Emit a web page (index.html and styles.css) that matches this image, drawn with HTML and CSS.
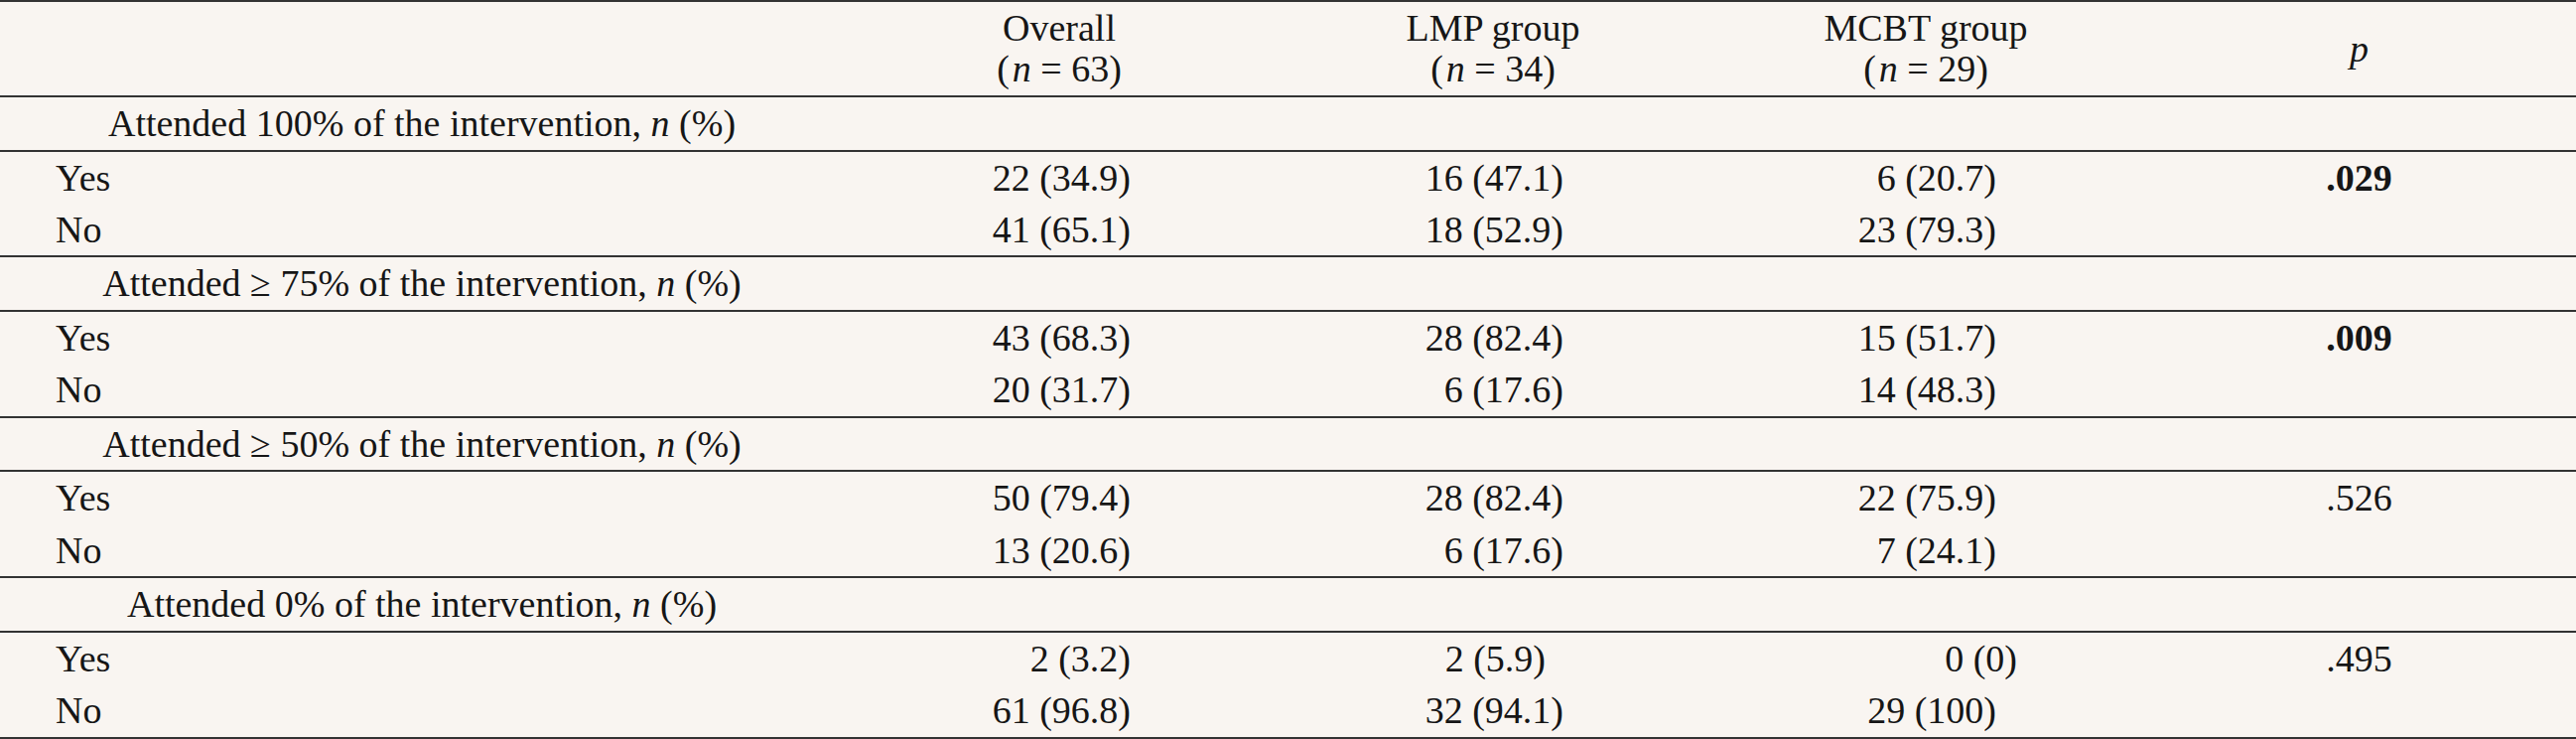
FILE: index.html
```html
<!DOCTYPE html>
<html lang="en">
<head>
<meta charset="utf-8">
<title>Attendance table</title>
<link rel="stylesheet" href="styles.css">
</head>
<body>
<table class="tbl">
  <colgroup>
    <col class="c-label">
    <col class="c-num">
    <col class="c-num">
    <col class="c-num">
    <col class="c-p">
  </colgroup>
  <thead>
    <tr class="head">
      <th></th>
      <th>Overall<br>(<i class="n">n</i> = 63)</th>
      <th>LMP group<br>(<i class="n">n</i> = 34)</th>
      <th>MCBT group<br>(<i class="n">n</i> = 29)</th>
      <th><i>p</i></th>
    </tr>
  </thead>
  <tbody>
    <tr class="section">
      <td class="sec-label">Attended 100% of the intervention, <i>n</i> (%)</td>
      <td></td><td></td><td></td><td></td>
    </tr>
    <tr class="row">
      <td class="lbl">Yes</td>
      <td class="val">22 (34.9)</td>
      <td class="val">16 (47.1)</td>
      <td class="val">6 (20.7)</td>
      <td class="pv"><b>.029</b></td>
    </tr>
    <tr class="row last">
      <td class="lbl">No</td>
      <td class="val">41 (65.1)</td>
      <td class="val">18 (52.9)</td>
      <td class="val">23 (79.3)</td>
      <td class="pv"></td>
    </tr>

    <tr class="section">
      <td class="sec-label">Attended ≥ 75% of the intervention, <i>n</i> (%)</td>
      <td></td><td></td><td></td><td></td>
    </tr>
    <tr class="row">
      <td class="lbl">Yes</td>
      <td class="val">43 (68.3)</td>
      <td class="val">28 (82.4)</td>
      <td class="val">15 (51.7)</td>
      <td class="pv"><b>.009</b></td>
    </tr>
    <tr class="row last">
      <td class="lbl">No</td>
      <td class="val">20 (31.7)</td>
      <td class="val">6 (17.6)</td>
      <td class="val">14 (48.3)</td>
      <td class="pv"></td>
    </tr>

    <tr class="section">
      <td class="sec-label">Attended ≥ 50% of the intervention, <i>n</i> (%)</td>
      <td></td><td></td><td></td><td></td>
    </tr>
    <tr class="row">
      <td class="lbl">Yes</td>
      <td class="val">50 (79.4)</td>
      <td class="val">28 (82.4)</td>
      <td class="val">22 (75.9)</td>
      <td class="pv">.526</td>
    </tr>
    <tr class="row last">
      <td class="lbl">No</td>
      <td class="val">13 (20.6)</td>
      <td class="val">6 (17.6)</td>
      <td class="val">7 (24.1)</td>
      <td class="pv"></td>
    </tr>

    <tr class="section">
      <td class="sec-label">Attended 0% of the intervention, <i>n</i> (%)</td>
      <td></td><td></td><td></td><td></td>
    </tr>
    <tr class="row">
      <td class="lbl">Yes</td>
      <td class="val">2 (3.2)</td>
      <td class="val shift-left">2 (5.9)</td>
      <td class="val shift-right">0 (0)</td>
      <td class="pv">.495</td>
    </tr>
    <tr class="row last">
      <td class="lbl">No</td>
      <td class="val">61 (96.8)</td>
      <td class="val">32 (94.1)</td>
      <td class="val">29 (100)</td>
      <td class="pv"></td>
    </tr>
  </tbody>
</table>
</body>
</html>
```

FILE: styles.css
```css
html, body {
  margin: 0;
  padding: 0;
  background: #f9f5f1;
}

body {
  font-family: "Liberation Serif", "Times New Roman", serif;
  font-size: 38px;
  color: #161616;
}

.tbl {
  width: 2595px;
  table-layout: fixed;
  border-collapse: separate;
  border-spacing: 0;
  border-top: 2px solid #333;
}

.c-label { width: 850px; }
.c-num { width: 436px; }
.c-p { width: 437px; }

.tbl th,
.tbl td {
  padding: 0;
  font-weight: normal;
  white-space: nowrap;
}

.head th {
  text-align: center;
  vertical-align: middle;
  line-height: 41px;
  padding: 6px 0;
  border-bottom: 2px solid #333;
}

.head th:nth-child(2) { padding-right: 2px; }

.n { margin-left: 3px; }

.section td {
  line-height: 52.6px;
  border-bottom: 2px solid #333;
}

.sec-label {
  text-align: center;
}

.row td {
  line-height: 52.4px;
}

.row.last td {
  border-bottom: 2px solid #333;
}

.lbl {
  text-align: left;
  padding-left: 56px !important;
}

.val {
  text-align: right;
  padding-right: 147px !important;
}

.val.shift-left { padding-right: 165px !important; }
.val.shift-right { padding-right: 126px !important; }

.pv {
  text-align: center;
}

.pv b {
  font-weight: bold;
}
```
